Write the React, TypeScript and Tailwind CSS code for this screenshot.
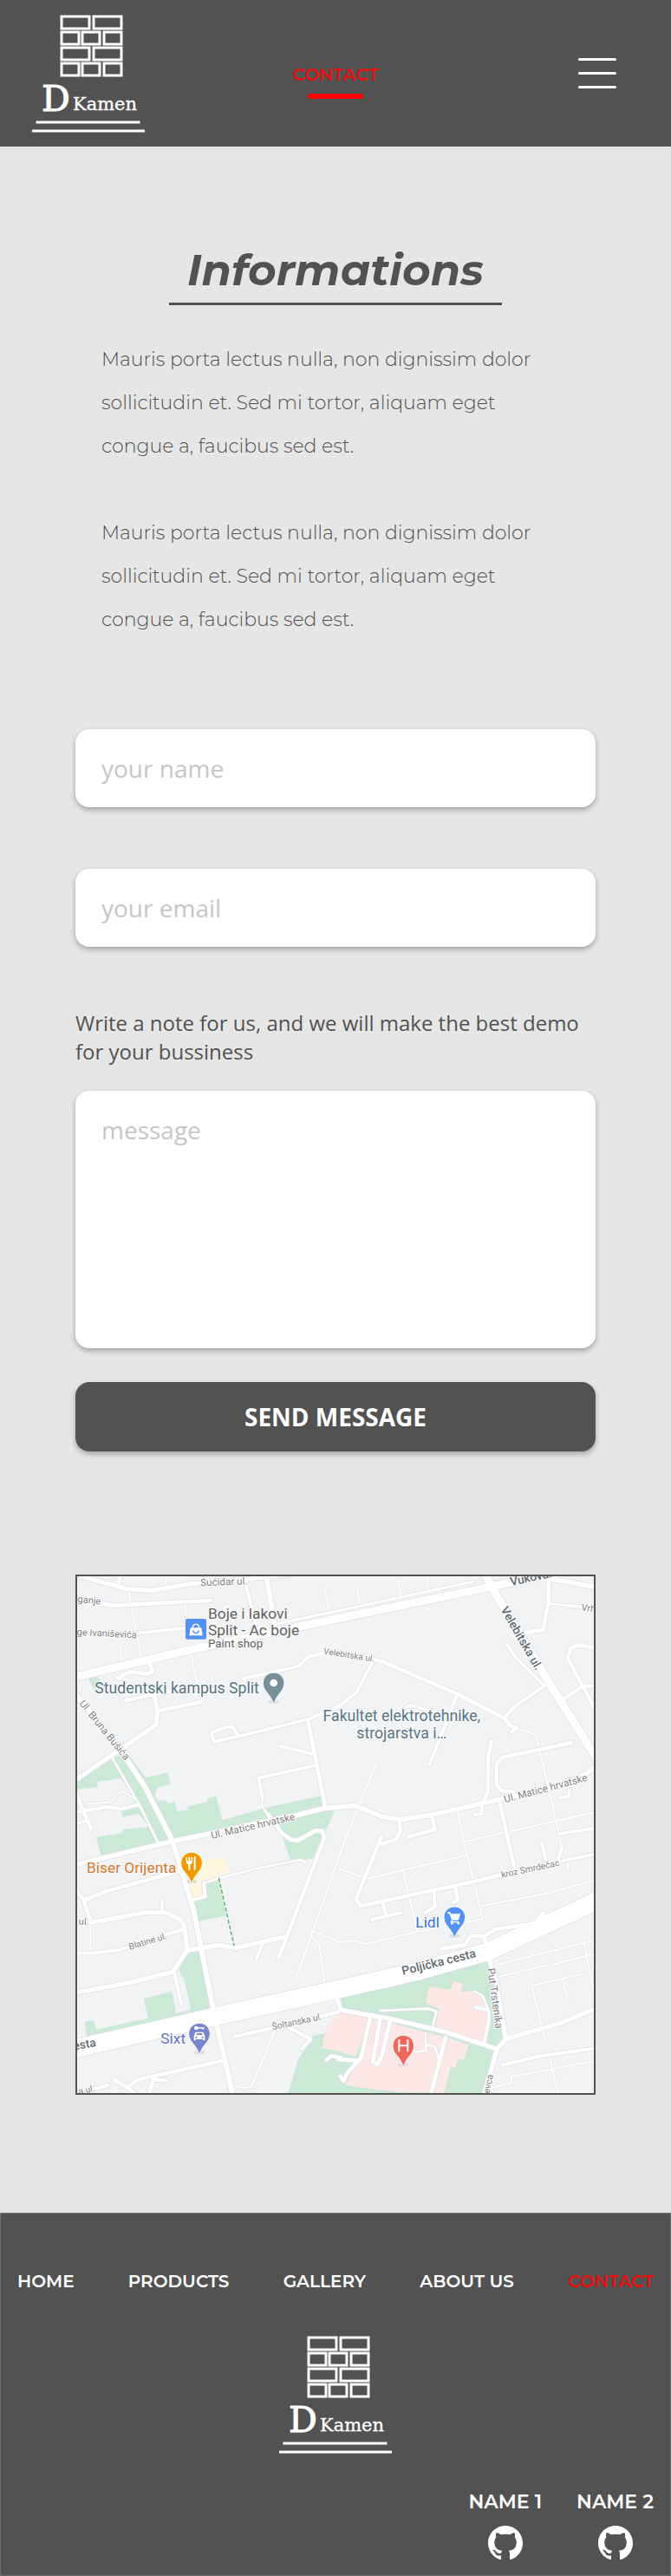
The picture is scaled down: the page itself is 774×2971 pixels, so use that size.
import React from "react";

type Road = [width: number, d: string];

const roads: Road[] = [
  [16, "M40 24 200 68 285 73 420 50 620 34 760 15"],
  [12, "M170 45 180 15"],
  [14, "M105 118 155 125 490 108"],
  [12, "M225 222 400 203"],
  [12, "M603 24 625 110 645 190"],
  [18, "M682 24 712 200"],
  [9, "M700 192 930 143 1400 42"],
  [12, "M600 378 795 335 825 303 885 288"],
  [14, "M165 375 180 378 183 366 215 354 268 362 288 355 278 325"],
  [14, "M195 454 400 410"],
  [14, "M305 490 455 460 465 440"],
  [16, "M20 730 165 630 300 538 305 490 295 440"],
  [12, "M580 570 567 545 545 545 492 565 500 596 610 572 830 518 930 475 992 428 1050 320"],
  [14, "M825 520 885 820"],
  [12, "M730 612 850 640"],
  [12, "M852 678 655 722 668 790"],
  [8, "M668 790 665 815 690 855"],
  [14, "M690 850 735 912 765 935 790 938 850 905 875 905 882 930 725 1343"],
  [14, "M20 770 75 898"],
  [12, "M20 840 130 823 180 828 240 815"],
  [12, "M20 880 60 870"],
  [8, "M150 655 245 820 308 948"],
  [6, "M60 812 150 805 165 778 185 768 230 795"],
  [14, "M1055 312 1085 320 1340 430 1505 515 1525 540 1548 550 1530 562"],
  [13, "M1505 515 1540 475 1650 400"],
  [12, "M1515 260 1540 300 1640 400"],
  [12, "M1342 432 1320 490 1246 675"],
  [10, "M1160 480 1180 470 1275 495"],
  [14, "M1658 30 1658 110 1640 208 1570 220"],
  [8, "M1660 118 1730 126"],
  [12, "M1725 126 1780 130"],
  [14, "M1820 272 1765 262 1735 272 1725 308 1820 485"],
  [13, "M1712 448 1775 405 1820 403"],
  [14, "M1460 595 1450 650 1448 770 1435 800"],
  [14, "M1738 600 1498 650 1478 675 1478 745 1495 765 1535 770"],
  [14, "M1488 800 1540 1035"],
  [12, "M1427 820 1427 845 1402 850"],
  [14, "M1142 870 1145 905 1130 935 1080 950"],
  [14, "M1255 855 1265 900 1175 925"],
  [12, "M1730 765 1730 785 1700 790"],
  [12, "M1695 915 1820 895"],
  [14, "M1080 925 992 1140 1008 1165 1400 1080 1500 1055"],
  [12, "M1700 1010 1820 985"],
  [12, "M1690 1010 1705 960M1650 1010 1635 945"],
  [13, "M1048 1212 1148 1188M1085 1155 1095 1195"],
  [13, "M1262 1115 1265 1168 1232 1188M1335 1100 1345 1145 1328 1153"],
  [14, "M1288 1313 1370 1298 1388 1268 1435 1270 1475 1245 1610 1225 1640 1190"],
  [14, "M1435 1270 1445 1310"],
  [14, "M50 1145 130 1113 340 1055 385 1042"],
  [14, "M20 1105 50 1145 75 1222"],
  [16, "M75 1222 265 1187 330 1187 385 1212 398 1235 408 1318"],
  [12, "M322 1187 320 1150"],
  [12, "M20 1327 75 1328 165 1318 230 1300M320 1268 395 1245"],
  [16, "M20 1465 210 1430 358 1393 408 1318 515 1300 575 1310 750 1270"],
  [12, "M362 1390 387 1503M668 1295 648 1345"],
  [12, "M430 1143 470 1132 465 1085"],
  [8, "M465 1085 520 1068 650 1035 800 1005 820 1015"],
  [13, "M570 1617 710 1585 930 1532M760 1585 835 1625 805 1658"],
  [13, "M530 1700 240 1765 205 1788M155 1765 205 1795 235 1820M290 1765 275 1820M290 1765 335 1768"],
  [12, "M60 1805 135 1785"],
  [12, "M890 1698 905 1683 940 1690"],
  [16, "M925 1485 940 1525 1110 1555 1300 1600 1480 1660"],
  [16, "M1455 1355 1475 1420 1510 1625 1480 1660 1435 1820"],
  [16, "M1510 1625 1700 1570 1820 1520"],
  [13, "M1500 1715 1625 1685 1820 1657"],
  [14, "M1040 1555 1010 1690 960 1745 950 1770 938 1755M930 1695 1000 1700"],
  [14, "M1075 1560 1050 1705 1065 1712 1080 1690 1110 1560"],
  [14, "M1302 1620 1250 1820"],
  [8, "M1075 1527 1245 1520 1270 1530 1258 1580"],
  [12, "M1405 1515 1450 1525 1452 1560 1435 1640"],
  [8, "M1450 1525 1430 1475 1400 1460"],
  [8, "M1232 1605 1235 1665 1200 1670M1235 1645 1265 1650 1280 1700"],
];

const lanes =
  "M205 75 248 305M402 120 405 200M175 265 182 320M420 290 455 450M335 24V60M885 70 898 140M993 55 1005 120M1137 35 1148 95M1237 24 1242 75M1405 24V45" +
  "M470 420 560 400M1062 672 960 920 785 1415M1535 550 1615 570 1700 940 1695 1000M1345 840 1362 930 1430 1210 1200 1255 1025 1297 980 1285 930 1290" +
  "M1155 1045 1205 1255M930 1035 1030 1070 1372 990M1368 942 1820 840M1425 1165 1660 1120 1820 1075M835 1250 930 1285M835 1265 865 1300 883 1425" +
  "M73 1225V1325M710 1600 630 1790 600 1795 565 1785M1470 1370 1820 1283M1490 1408 1650 1370M1670 1368 1820 1330M1780 1290 1815 1460" +
  "M1600 1440 1765 1402M1600 1440 1648 1635M1707 1420 1725 1485M1595 1385V1400M1725 1015V1040M1430 1805 1530 1775 1530 1755 1820 1700M1662 1690 1690 1812M925 1485 930 1515";

interface StreetProps {
  x: number;
  y: number;
  angle: number;
  size?: number;
  bold?: boolean;
  children: string;
}

function Street({ x, y, angle, size = 33, bold, children }: StreetProps) {
  return (
    <text
      transform={`translate(${x} ${y}) rotate(${angle})`}
      fontSize={size}
      fontWeight={bold ? 500 : 400}
      textAnchor="middle"
      dominantBaseline="central"
      fill={bold ? "#5f6b70" : "#808080"}
      stroke="#fff"
      strokeWidth={6}
      paintOrder="stroke"
    >
      {children}
    </text>
  );
}

function Pin({ x, y, color, children }: { x: number; y: number; color: string; children: React.ReactNode }) {
  return (
    <g transform={`translate(${x} ${y})`}>
      <ellipse cx="0" cy="63" rx="18" ry="7" fill="#dadce0" />
      <path
        d="M0-38C-21-38-37-22-37-1-37 15-29 24-21 34-12 46-6 54-3 65Q0 69 3 65C6 54 12 46 21 34 29 24 37 15 37-1 37-22 21-38 0-38Z"
        fill={color}
        stroke="#fff"
        strokeWidth="3"
      />
      {children}
    </g>
  );
}

function CityMap() {
  return (
    <svg
      viewBox="27 24 1788 1788"
      className="block w-full border-2 border-[#525252] bg-[#f1f3f4] font-['Roboto',sans-serif]"
      role="img"
      aria-label="Map"
    >
      <g fill="#cce8d6">
        <path d="M27 728 165 645 210 650 265 720 340 703 350 742 305 755 296 780 305 802 335 798 340 810 365 805 373 838 410 832 410 820 478 805 475 792 508 785 530 868 680 825 870 783 880 825 780 855 360 945 110 992 93 927 183 912 183 900 275 890 240 845 185 857 178 838 240 822 180 723 97 735 97 753 27 762Z" />
        <path d="M690 870 920 830 880 920 840 1003 765 1004 735 920Z" />
        <path d="M473 1085 518 1078 542 1198 447 1217 430 1150 478 1135Z" />
        <path d="M378 1385 410 1325 448 1318 490 1520 60 1615 53 1565 85 1560 92 1592 272 1553 257 1485 355 1460 370 1537 420 1522 400 1425Z" />
        <path d="M65 378 100 372 110 402 85 415Z" />
        <path d="M757 1812 790 1700 845 1612 940 1600 940 1482 1450 1352 1510 1620 1480 1665 1435 1812Z" />
      </g>
      <g fill="#fce8e6">
        <path d="M885 1597 930 1535 1045 1552 990 1685 930 1668 875 1655Z" />
        <path d="M1040 1550 1305 1620 1382 1645 1365 1697 1345 1695 1337 1725 1320 1722 1297 1812 1130 1808 955 1785 1000 1700Z" />
        <path d="M1240 1460 1248 1445 1320 1455 1328 1425 1362 1433 1355 1463 1395 1457 1425 1475 1455 1540 1430 1645 1265 1590 1280 1520 1235 1500Z" />
      </g>
      <path d="M455 1010 485 1002 545 1000 549 1048 525 1065 543 1150 518 1070 465 1085 473 1130 425 1143 405 1060Z" fill="#fef7e0" />

      <path d={lanes} fill="none" stroke="#e3e4e6" strokeWidth="9" strokeLinecap="round" />
      <path d={lanes} fill="none" stroke="#fff" strokeWidth="6" strokeLinecap="round" />

      <g fill="none" stroke="#dcdee4" strokeLinecap="round" strokeLinejoin="round">
        {roads.map(([w, d]) => (
          <path key={d} d={d} strokeWidth={w + 4} />
        ))}
        <path d="M20 430 170 615 260 750 350 925 368 975 430 1180 470 1380 500 1530 565 1815" strokeWidth="22" />
        <path d="M20 1022 350 943 790 850 885 826 990 818 1080 855 1145 866 1250 850 1490 796 1640 765 1760 725 1820 685" strokeWidth="21" />
        <path d="M1640 28 1825 62" strokeWidth="20" />
        <path d="M20 372 420 278 930 170 1460 60 1660 15" strokeWidth="32" />
        <path d="M1435 10 1475 85 1665 400 1825 655" strokeWidth="32" />
        <path d="M15 1660 500 1548 930 1453 1200 1392 1450 1322 1825 1147" strokeWidth="66" />
      </g>
      <g fill="none" stroke="#fff" strokeLinecap="round" strokeLinejoin="round">
        {roads.map(([w, d]) => (
          <path key={d} d={d} strokeWidth={w} />
        ))}
        <path d="M20 430 170 615 260 750 350 925 368 975 430 1180 470 1380 500 1530 565 1815" strokeWidth="18" />
        <path d="M20 1022 350 943 790 850 885 826 990 818 1080 855 1145 866 1250 850 1490 796 1640 765 1760 725 1820 685" strokeWidth="17" />
        <path d="M1640 28 1825 62" strokeWidth="16" />
        <path d="M20 372 420 278 930 170 1460 60 1660 15" strokeWidth="28" />
        <path d="M1435 10 1475 85 1665 400 1825 655" strokeWidth="28" />
        <path d="M15 1660 500 1548 930 1453 1200 1392 1450 1322 1825 1147" strokeWidth="62" />
      </g>
      <path d="M517 1068 570 1302" fill="none" stroke="#4bb36b" strokeWidth="4" strokeDasharray="14 7" />

      <Street x={535} y={43} angle={-2} size={35}>Sućidar ul.</Street>
      <Street x={60} y={106} angle={6}>aganje</Street>
      <Street x={120} y={222} angle={3}>oge Ivaniševića</Street>
      <Street x={122} y={556} angle={51} size={35}>Ul. Bruna Bušića</Street>
      <Street x={968} y={296} angle={9} size={30}>Velebitska ul.</Street>
      <Street x={1566} y={238} angle={60} size={41} bold>Velebitska ul.</Street>
      <Street x={1630} y={20} angle={-12} size={41} bold>Vukovarska</Street>
      <Street x={1806} y={136} angle={6}>Vrho</Street>
      <Street x={635} y={888} angle={-13} size={35}>Ul. Matice hrvatske</Street>
      <Street x={1648} y={758} angle={-15} size={35}>Ul. Matice hrvatske</Street>
      <Street x={1595} y={1036} angle={-12} size={31}>kroz Smrdečac</Street>
      <Street x={50} y={1219} angle={4}>ul.</Street>
      <Street x={271} y={1287} angle={-17} size={31}>Blatine ul.</Street>
      <Street x={788} y={1565} angle={-12} size={31}>Šoltanska ul.</Street>
      <Street x={52} y={1642} angle={-10} size={41} bold>esta</Street>
      <Street x={1278} y={1358} angle={-14} size={42} bold>Poljička cesta</Street>
      <Street x={1473} y={1484} angle={82} size={36}>Put Trstenika</Street>
      <Street x={44} y={1804} angle={-12} size={31}>ska ul.</Street>
      <Street x={1450} y={1780} angle={-78} size={32}>evca</Street>

      <g fontSize="52" stroke="#f8f9fa" strokeWidth="6" paintOrder="stroke" strokeLinejoin="round">
        <g fill="#616161">
          <text x="480" y="171">Boje i lakovi</text>
          <text x="480" y="227">Split - Ac boje</text>
          <text x="480" y="271" fontSize="40">Paint shop</text>
        </g>
        <g fill="#587482" fontSize="53">
          <text x="88" y="428">Studentski kampus Split</text>
          <text x="1150" y="524" textAnchor="middle">Fakultet elektrotehnike,</text>
          <text x="1150" y="586" textAnchor="middle">strojarstva i…</text>
        </g>
        <text x="60" y="1049" fill="#d6772a">Biser Orijenta</text>
        <text x="1198" y="1239" fill="#2c73d9">Lidl</text>
        <text x="316" y="1641" fill="#6571c8">Sixt</text>
      </g>

      <rect x="402" y="171" width="72" height="71" rx="6" fill="#5491f5" />
      <path d="M419 202h38l4 27h-46z" fill="#fff" />
      <path d="M427 203c0-17 22-17 22 0" fill="none" stroke="#fff" strokeWidth="4" />
      <path d="M428 211c2 13 18 13 20 0" fill="none" stroke="#5491f5" strokeWidth="4" />

      <Pin x={707} y={395} color="#78909c">
        <circle cx="0" cy="-2" r="13" fill="#fff" />
      </Pin>
      <Pin x={423} y={1017} color="#f29900">
        <path d="M-19-21v14c0 7 4 9 8 11v20h6V4c4-2 8-4 8-11v-14h-4v13h-4v-13h-6v13h-4v-13zM8-20v44h6V-24c-4 0-6 2-6 4z" fill="#fff" />
      </Pin>
      <Pin x={1333} y={1205} color="#5491f5">
        <path d="M-24-19h9l3 6h32l-7 22h-22L-18-13h-6z" fill="#fff" />
        <path d="M-8 9-12 15h28" fill="none" stroke="#fff" strokeWidth="4" />
        <circle cx="-9" cy="20" r="4" fill="#fff" />
        <circle cx="13" cy="20" r="4" fill="#fff" />
      </Pin>
      <Pin x={450} y={1608} color="#7986cb">
        <circle cx="-11" cy="-21" r="7" fill="#fff" />
        <path d="M-6-23h24v4h-4v4h-4v-4h-16z" fill="#fff" />
        <path d="M-19 22V6l6-13h26l6 13v16h-6v-4h-26v4z" fill="#fff" />
        <path d="M-12 3-8-3H8l4 6zM-14 9h6v5h-6zM8 9h6v5H8z" fill="#7986cb" />
      </Pin>
      <Pin x={1156} y={1650} color="#ee675c">
        <path d="M-15-23v42M15-23v42M-15-2h30" stroke="#fff" strokeWidth="6" />
      </Pin>
    </svg>
  );
}

function Logo() {
  const wide = [34, 71];
  const narrow = [34, 58, 83];
  return (
    <svg viewBox="0 0 130 136" className="h-[136px] w-[130px]" role="img" aria-label="D Kamen">
      <g fill="none" stroke="#fff" strokeWidth="3">
        {[0, 36].map((y) => (
          <g key={y}>
            {wide.map((x) => (
              <rect key={x} x={x} y={y + 2} width="32" height="14" />
            ))}
            {narrow.map((x) => (
              <rect key={x} x={x} y={y + 20} width="20" height="14" />
            ))}
          </g>
        ))}
      </g>
      <g fill="#fff" stroke="#fff" fontFamily="'DejaVu Serif', serif" fontWeight="400">
        <text x="11" y="111" fontSize="41" strokeWidth="1">D</text>
        <text x="47" y="110" fontSize="21" strokeWidth="0.3">Kamen</text>
      </g>
      <path d="M4.500 124h120M0 134h130" stroke="#fff" strokeWidth="3" />
    </svg>
  );
}

function GitHubMark() {
  return (
    <svg viewBox="0 0 16 16" className="size-10" fill="#fff" aria-hidden="true">
      <path d="M8 0C3.580 0 0 3.580 0 8c0 3.540 2.290 6.530 5.470 7.590.4.070.55-.17.55-.38 0-.19-.01-.82-.01-1.490-2.010.37-2.530-.49-2.690-.94-.09-.23-.48-.94-.82-1.130-.28-.15-.68-.52-.01-.53.63-.01 1.080.58 1.230.82.72 1.210 1.870.87 2.330.66.070-.52.28-.87.51-1.070-1.780-.2-3.640-.89-3.640-3.950 0-.87.31-1.590.82-2.150-.08-.2-.36-1.020.08-2.120 0 0 .67-.21 2.200.82.64-.18 1.320-.27 2-.27s1.360.09 2 .27c1.530-1.040 2.200-.82 2.200-.82.44 1.100.16 1.920.08 2.120.51.56.82 1.270.82 2.150 0 3.070-1.870 3.750-3.650 3.950.29.25.54.73.54 1.480 0 1.070-.01 1.930-.01 2.200 0 .21.15.46.55.38A8.010 8.010 0 0 0 16 8c0-4.420-3.580-8-8-8Z" />
    </svg>
  );
}

const fieldClass =
  "block w-full rounded-2xl bg-white px-[30px] text-[28px] text-[#525252] shadow-[0_3px_6px_rgba(0,0,0,0.3)] outline-none placeholder:text-[#c6c6c6]";

const paragraph =
  "Mauris porta lectus nulla, non dignissim dolor sollicitudin et. Sed mi tortor, aliquam eget congue a, faucibus sed est.";

export default function App() {
  return (
    <div className="min-h-screen bg-[#e6e6e6] font-['Montserrat','Inter',sans-serif] text-[#525252]">
      <header className="grid h-[169px] grid-cols-3 items-center bg-[#525252] px-[37px]">
        <a href="#home" className="justify-self-start">
          <Logo />
        </a>
        <a href="#contact" className="flex flex-col items-center gap-2 pt-4 text-xl font-semibold text-[#e60e0e]">
          CONTACT
          <span className="h-[6px] w-16 rounded-full bg-[#ff0000]" />
        </a>
        <button type="button" aria-label="Open menu" className="mr-[26px] flex w-11 flex-col gap-[13px] justify-self-end">
          <span className="h-[3px] rounded-full bg-white" />
          <span className="h-[3px] rounded-full bg-white" />
          <span className="h-[3px] rounded-full bg-white" />
        </button>
      </header>

      <main className="mx-auto flex w-full max-w-[640px] flex-col px-5 pt-[110px] pb-[136px]">
        <h1 className="mx-auto w-96 border-b-[3px] border-[#525252] pb-1 text-center text-[50px] leading-[66px] font-bold whitespace-nowrap italic">
          Informations
        </h1>
        <div className="flex flex-col gap-[50px] pt-[38px] pr-[60px] pl-[30px] text-[22px] leading-[50px] font-[350]">
          <p>{paragraph}</p>
          <p>{paragraph}</p>
        </div>

        <form className="flex flex-col pt-[101px] font-['Open_Sans',sans-serif]" onSubmit={(e) => e.preventDefault()}>
          <input aria-label="your name" type="text" placeholder="your name" className={`${fieldClass} h-[90px]`} />
          <input aria-label="your email" type="email" placeholder="your email" className={`${fieldClass} mt-[71px] h-[90px]`} />
          <label htmlFor="message" className="pt-[71px] pb-[29px] text-2xl leading-[33px]">
            Write a note for us, and we will make the best demo for your bussiness
          </label>
          <textarea id="message" placeholder="message" className={`${fieldClass} h-[297px] resize-none py-6`} />
          <button
            type="submit"
            className="mt-[39px] h-20 rounded-2xl bg-[#525252] text-[28px] font-bold text-white shadow-[0_3px_6px_rgba(0,0,0,0.3)]"
          >
            SEND MESSAGE
          </button>
        </form>

        <div className="pt-[142px]">
          <CityMap />
        </div>
      </main>

      <footer className="border border-[#707070] bg-[#525252] px-[19px] pt-[65px] pb-[17px] font-semibold text-white">
        <nav className="flex justify-between text-xl leading-[26px]">
          <a href="#home">HOME</a>
          <a href="#products">PRODUCTS</a>
          <a href="#gallery">GALLERY</a>
          <a href="#about">ABOUT US</a>
          <a href="#contact" className="text-[#e60e0e]">CONTACT</a>
        </nav>
        <div className="flex justify-center pt-[50px]">
          <Logo />
        </div>
        <div className="flex justify-end gap-10 pt-[42px] text-[22px] leading-[28px]">
          <a href="#name-1" className="flex flex-col items-center gap-[13px]">
            NAME 1
            <GitHubMark />
          </a>
          <a href="#name-2" className="flex flex-col items-center gap-[13px]">
            NAME 2
            <GitHubMark />
          </a>
        </div>
      </footer>
    </div>
  );
}
